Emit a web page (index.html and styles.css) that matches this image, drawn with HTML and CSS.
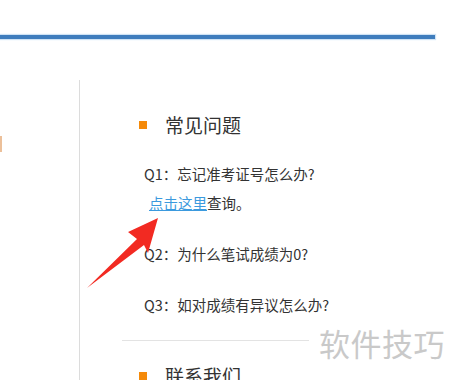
FILE: index.html
```html
<!DOCTYPE html>
<html lang="zh">
<head>
<meta charset="utf-8">
<link rel="stylesheet" href="styles.css">
</head>
<body>
<div class="page">
  <div class="header">
    <div class="rule"></div>
  </div>
  <div class="main">
    <div class="left">
      <span class="left-mark"></span>
    </div>
    <div class="content">
      <div class="section">
        <h2 class="title"><span class="sq"></span>常见问题</h2>
        <p class="q first">Q1：忘记准考证号怎么办?</p>
        <p class="q link-line"><a class="link" href="#">点击这里</a>查询。</p>
        <p class="q gap">Q2：为什么笔试成绩为0?</p>
        <p class="q gap">Q3：如对成绩有异议怎么办?</p>
      </div>
      <div class="divider"></div>
      <div class="section">
        <h2 class="title second"><span class="sq"></span>联系我们</h2>
      </div>
    </div>
  </div>
  <svg class="arrow" width="450" height="380" viewBox="0 0 450 380">
    <polygon points="158,218 128,232 137,239 87,288 144,245 148,253" fill="#f22a22"/>
  </svg>
  <div class="watermark">软件技巧</div>
</div>
</body>
</html>
```
FILE: styles.css
```css
html, body {
  margin: 0;
  padding: 0;
  background: #fff;
}
body {
  width: 450px;
  height: 380px;
  overflow: hidden;
  font-family: "Noto Sans CJK SC", "Noto Sans", sans-serif;
  color: #333;
}
.page {
  position: relative;
  width: 450px;
  height: 380px;
  overflow: hidden;
}
.header {
  padding-top: 35px;
  height: 80px;
  box-sizing: border-box;
}
.rule {
  width: 435px;
  height: 4px;
  background: #3f7dbd;
  box-shadow: 0 0 1px 1px #cfe3f5;
}
.main {
  display: flex;
  height: 300px;
}
.left {
  width: 80px;
  border-right: 1px solid #dcdcdc;
  flex: none;
  padding-top: 56px;
  box-sizing: border-box;
}
.left-mark {
  display: block;
  width: 2px;
  height: 16px;
  background: #ecc09a;
}
.content {
  flex: 1;
  padding-left: 42px;
}
.section {
  padding-left: 17px;
}
.title {
  display: flex;
  align-items: center;
  gap: 18px;
  margin: 33px 0 0;
  font-size: 19px;
  font-weight: normal;
  line-height: 24px;
  color: #333;
}
.title.second {
  margin-top: 23px;
}
.sq {
  width: 8px;
  height: 8px;
  background: #f58a0a;
  flex: none;
}
.q {
  margin: 0;
  padding-left: 5px;
  font-size: 14.5px;
  line-height: 28px;
  color: #333;
}
.q.first {
  margin-top: 23px;
}
.q.link-line {
  margin-top: 1px;
}
.q.gap {
  margin-top: 23px;
}
.link {
  color: #3b9ade;
  text-decoration: underline;
  margin-left: 5px;
}
.divider {
  margin-top: 21px;
  width: 187px;
  height: 1px;
  background: #e3e3e3;
}
.arrow {
  position: absolute;
  left: 0;
  top: 0;
}
.watermark {
  position: absolute;
  left: 319px;
  top: 323px;
  font-size: 31px;
  line-height: 40px;
  color: #c9c9c9;
  letter-spacing: 0.5px;
}
```
